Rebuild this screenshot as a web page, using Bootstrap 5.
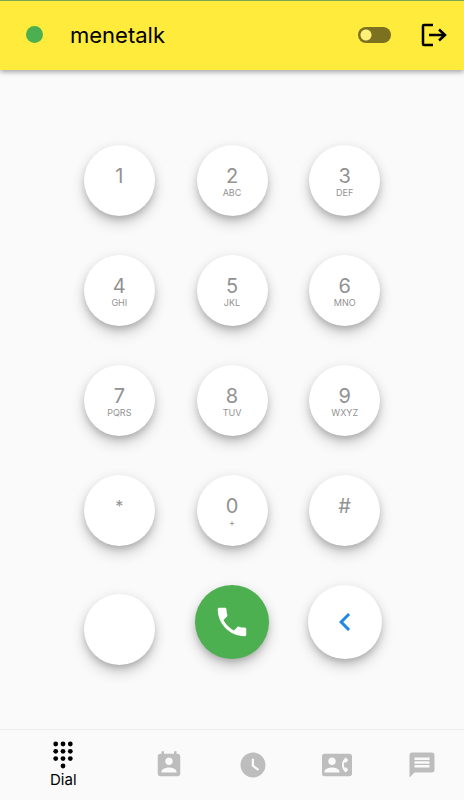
<!DOCTYPE html>
<html lang="en">
<head>
<meta charset="utf-8">
<meta name="viewport" content="width=device-width, initial-scale=1">
<title>menetalk</title>
<link href="https://cdn.jsdelivr.net/npm/bootstrap@5.3.0/dist/css/bootstrap.min.css" rel="stylesheet">
<style>
  body { font-family: Inter, Roboto, sans-serif; background: #fafafa; }
  svg { display: block; }
  .top-bar {
    height: 70px; padding: 0 17px 2px 26px; background: #ffeb3b;
    border-top: 1px solid #7fa650; box-shadow: 0 2px 5px rgba(0,0,0,.35);
  }
  .status-dot { width: 17px; height: 17px; background: #4caf50; }
  .brand-name { font-size: 22px; line-height: 28px; font-weight: 400; color: #000; margin-left: 27px; -webkit-text-stroke: 0; }
  .top-bar .form-check-input {
    width: 33px; height: 16px; border: 0; border-radius: 8px; background-color: #7b7121;
    background-image: radial-gradient(circle at 8px 8px, #fff07a 5px, transparent 6px);
    background-size: 100% 100%; background-position: 0 0;
  }
  .top-bar .form-check-input:checked { background-image: radial-gradient(circle at 25px 8px, #fff07a 5px, transparent 6px); }
  .pad-area { padding: 75px 63px 40px; }
  .pad-row { height: 110px; }
  .dial-key {
    width: 71px; height: 71px; padding: 1px 0 0; background: #fff; color: #929292;
    box-shadow: 0 8px 14px rgba(0,0,0,.16), 0 1px 14px rgba(0,0,0,.06), 0 4px 6px -1px rgba(0,0,0,.16);
  }
  .dial-key:hover { background: #f5f5f5; }
  .key-digit { font-size: 20px; line-height: 24px; font-weight: 400; }
  .key-star { font-size: 16px; }
  .key-letters { font-size: 9px; line-height: 10px; height: 10px; }
  .key-large { width: 74px; height: 74px; padding: 0; }
  .key-call, .key-call:hover { background: #4caf50; color: #fff; }
  .key-back { color: #1e88e5; }
  .key-blank { margin-top: 9px; }
  .tab-bar { height: 71px; border-top: 1px solid #eee; }
  .tab-link { flex: 2 1 0; color: #bdbdbd; }
  .tab-link.active { flex-grow: 3; color: #000; }
  .tab-text { font-size: 15px; line-height: 20px; margin-top: 1px; }
</style>
<script src="https://cdn.jsdelivr.net/npm/bootstrap@5.3.0/dist/js/bootstrap.bundle.min.js"></script>
</head>
<body class="d-flex flex-column min-vh-100">
<header class="top-bar d-flex align-items-center">
  <span class="status-dot rounded-circle" role="img" aria-label="Online"></span>
  <h1 class="brand-name mb-0">menetalk</h1>
  <input class="form-check-input ms-auto mt-0 me-4" type="checkbox" role="switch" aria-label="Availability">
  <button type="button" class="btn border-0 p-0 ms-1" aria-label="Log out">
    <svg width="28" height="28" viewBox="0 0 28 28" fill="none" stroke="#000" stroke-width="2.500"><path d="M14 4H5q-1 0-1 1v18q0 1 1 1h9M10 14h16M20 8.500l6 5.500-6 5.500"/></svg>
  </button>
</header>

<main class="pad-area flex-grow-1">
  <div class="row g-0 pad-row">
    <div class="col d-flex justify-content-center"><button type="button" class="btn border-0 rounded-circle dial-key d-flex flex-column align-items-center justify-content-center"><span class="key-digit">1</span><span class="key-letters"></span></button></div>
    <div class="col d-flex justify-content-center"><button type="button" class="btn border-0 rounded-circle dial-key d-flex flex-column align-items-center justify-content-center"><span class="key-digit">2</span><span class="key-letters">ABC</span></button></div>
    <div class="col d-flex justify-content-center"><button type="button" class="btn border-0 rounded-circle dial-key d-flex flex-column align-items-center justify-content-center"><span class="key-digit">3</span><span class="key-letters">DEF</span></button></div>
  </div>
  <div class="row g-0 pad-row">
    <div class="col d-flex justify-content-center"><button type="button" class="btn border-0 rounded-circle dial-key d-flex flex-column align-items-center justify-content-center"><span class="key-digit">4</span><span class="key-letters">GHI</span></button></div>
    <div class="col d-flex justify-content-center"><button type="button" class="btn border-0 rounded-circle dial-key d-flex flex-column align-items-center justify-content-center"><span class="key-digit">5</span><span class="key-letters">JKL</span></button></div>
    <div class="col d-flex justify-content-center"><button type="button" class="btn border-0 rounded-circle dial-key d-flex flex-column align-items-center justify-content-center"><span class="key-digit">6</span><span class="key-letters">MNO</span></button></div>
  </div>
  <div class="row g-0 pad-row">
    <div class="col d-flex justify-content-center"><button type="button" class="btn border-0 rounded-circle dial-key d-flex flex-column align-items-center justify-content-center"><span class="key-digit">7</span><span class="key-letters">PQRS</span></button></div>
    <div class="col d-flex justify-content-center"><button type="button" class="btn border-0 rounded-circle dial-key d-flex flex-column align-items-center justify-content-center"><span class="key-digit">8</span><span class="key-letters">TUV</span></button></div>
    <div class="col d-flex justify-content-center"><button type="button" class="btn border-0 rounded-circle dial-key d-flex flex-column align-items-center justify-content-center"><span class="key-digit">9</span><span class="key-letters">WXYZ</span></button></div>
  </div>
  <div class="row g-0 pad-row">
    <div class="col d-flex justify-content-center"><button type="button" class="btn border-0 rounded-circle dial-key d-flex flex-column align-items-center justify-content-center"><span class="key-digit key-star">*</span><span class="key-letters"></span></button></div>
    <div class="col d-flex justify-content-center"><button type="button" class="btn border-0 rounded-circle dial-key d-flex flex-column align-items-center justify-content-center"><span class="key-digit">0</span><span class="key-letters">+</span></button></div>
    <div class="col d-flex justify-content-center"><button type="button" class="btn border-0 rounded-circle dial-key d-flex flex-column align-items-center justify-content-center"><span class="key-digit">#</span><span class="key-letters"></span></button></div>
  </div>
  <div class="row g-0">
    <div class="col d-flex justify-content-center"><button type="button" class="btn border-0 rounded-circle dial-key key-blank" aria-label="Blank key"></button></div>
    <div class="col d-flex justify-content-center"><button type="button" class="btn border-0 rounded-circle dial-key key-large key-call d-flex align-items-center justify-content-center" aria-label="Call">
      <svg width="38" height="38" viewBox="0 0 24 24" fill="currentColor"><path d="M6.620 10.790c1.440 2.830 3.760 5.140 6.590 6.590l2.200-2.200c.27-.27.67-.36 1.020-.24 1.120.37 2.330.57 3.570.57.55 0 1 .45 1 1V20c0 .55-.45 1-1 1-9.390 0-17-7.610-17-17 0-.55.45-1 1-1h3.500c.55 0 1 .45 1 1 0 1.250.2 2.450.57 3.570.11.35.03.74-.25 1.020l-2.200 2.200z"/></svg>
    </button></div>
    <div class="col d-flex justify-content-center"><button type="button" class="btn border-0 rounded-circle dial-key key-large key-back d-flex align-items-center justify-content-center" aria-label="Backspace">
      <svg width="36" height="36" viewBox="0 0 24 24" fill="currentColor"><path d="M15.410 7.410L14 6l-6 6 6 6 1.410-1.410L10.830 12z"/></svg>
    </button></div>
  </div>
</main>

<nav class="tab-bar d-flex" aria-label="Main">
  <a href="#dial" class="tab-link active d-flex flex-column align-items-center justify-content-center text-decoration-none" aria-current="page">
    <svg width="22" height="28" viewBox="0 0 22 28" fill="currentColor"><g><circle cx="3.700" cy="3" r="2.400"/><circle cx="11" cy="3" r="2.400"/><circle cx="18.300" cy="3" r="2.400"/><circle cx="3.700" cy="10.300" r="2.400"/><circle cx="11" cy="10.300" r="2.400"/><circle cx="18.300" cy="10.300" r="2.400"/><circle cx="3.700" cy="17.600" r="2.400"/><circle cx="11" cy="17.600" r="2.400"/><circle cx="18.300" cy="17.600" r="2.400"/><circle cx="11" cy="25" r="2.400"/></g></svg>
    <span class="tab-text">Dial</span>
  </a>
  <a href="#contacts" class="tab-link d-flex align-items-center justify-content-center" aria-label="Contacts">
    <svg width="30" height="30" viewBox="0 0 24 24" fill="currentColor"><path d="M19 3h-1V1h-2v2H8V1H6v2H5c-1.110 0-2 .9-2 2v14c0 1.100.89 2 2 2h14c1.100 0 2-.9 2-2V5c0-1.100-.9-2-2-2zm-7 3c1.660 0 3 1.340 3 3s-1.340 3-3 3-3-1.340-3-3 1.340-3 3-3zm6 12H6v-1c0-2 4-3.100 6-3.100s6 1.100 6 3.100v1z"/></svg>
  </a>
  <a href="#recent" class="tab-link d-flex align-items-center justify-content-center" aria-label="Recent calls">
    <svg width="30" height="30" viewBox="0 0 24 24" fill="currentColor"><path d="M12 2C6.500 2 2 6.500 2 12s4.500 10 10 10 10-4.500 10-10S17.500 2 12 2zm3.800 14.600L11 13V7h1.800v5.200l4.200 3.200z"/></svg>
  </a>
  <a href="#phonebook" class="tab-link d-flex align-items-center justify-content-center" aria-label="Phone book">
    <svg width="30" height="30" viewBox="0 0 24 24" fill="currentColor"><path d="M22 3H2C.9 3 0 3.900 0 5v14c0 1.100.9 2 2 2h20c1.100 0 1.990-.9 1.990-2L24 5c0-1.100-.9-2-2-2zM8 6c1.660 0 3 1.340 3 3s-1.340 3-3 3-3-1.340-3-3 1.340-3 3-3zm6 12H2v-1c0-2 4-3.100 6-3.100s6 1.100 6 3.100v1zm3.850-4h1.640L21 16l-1.990 1.990c-1.310-.98-2.280-2.380-2.730-3.990-.18-.64-.28-1.310-.28-2s.1-1.360.28-2c.45-1.620 1.420-3.010 2.730-3.990L21 8l-1.510 2h-1.640c-.22.63-.35 1.300-.35 2s.13 1.370.35 2z"/></svg>
  </a>
  <a href="#messages" class="tab-link d-flex align-items-center justify-content-center" aria-label="Messages">
    <svg width="30" height="30" viewBox="0 0 24 24" fill="currentColor"><path d="M20 2H4c-1.100 0-1.990.9-1.990 2L2 22l4-4h14c1.100 0 2-.9 2-2V4c0-1.100-.9-2-2-2zm-2 12H6v-2h12v2zm0-3H6V9h12v2zm0-3H6V6h12v2z"/></svg>
  </a>
</nav>
</body>
</html>
